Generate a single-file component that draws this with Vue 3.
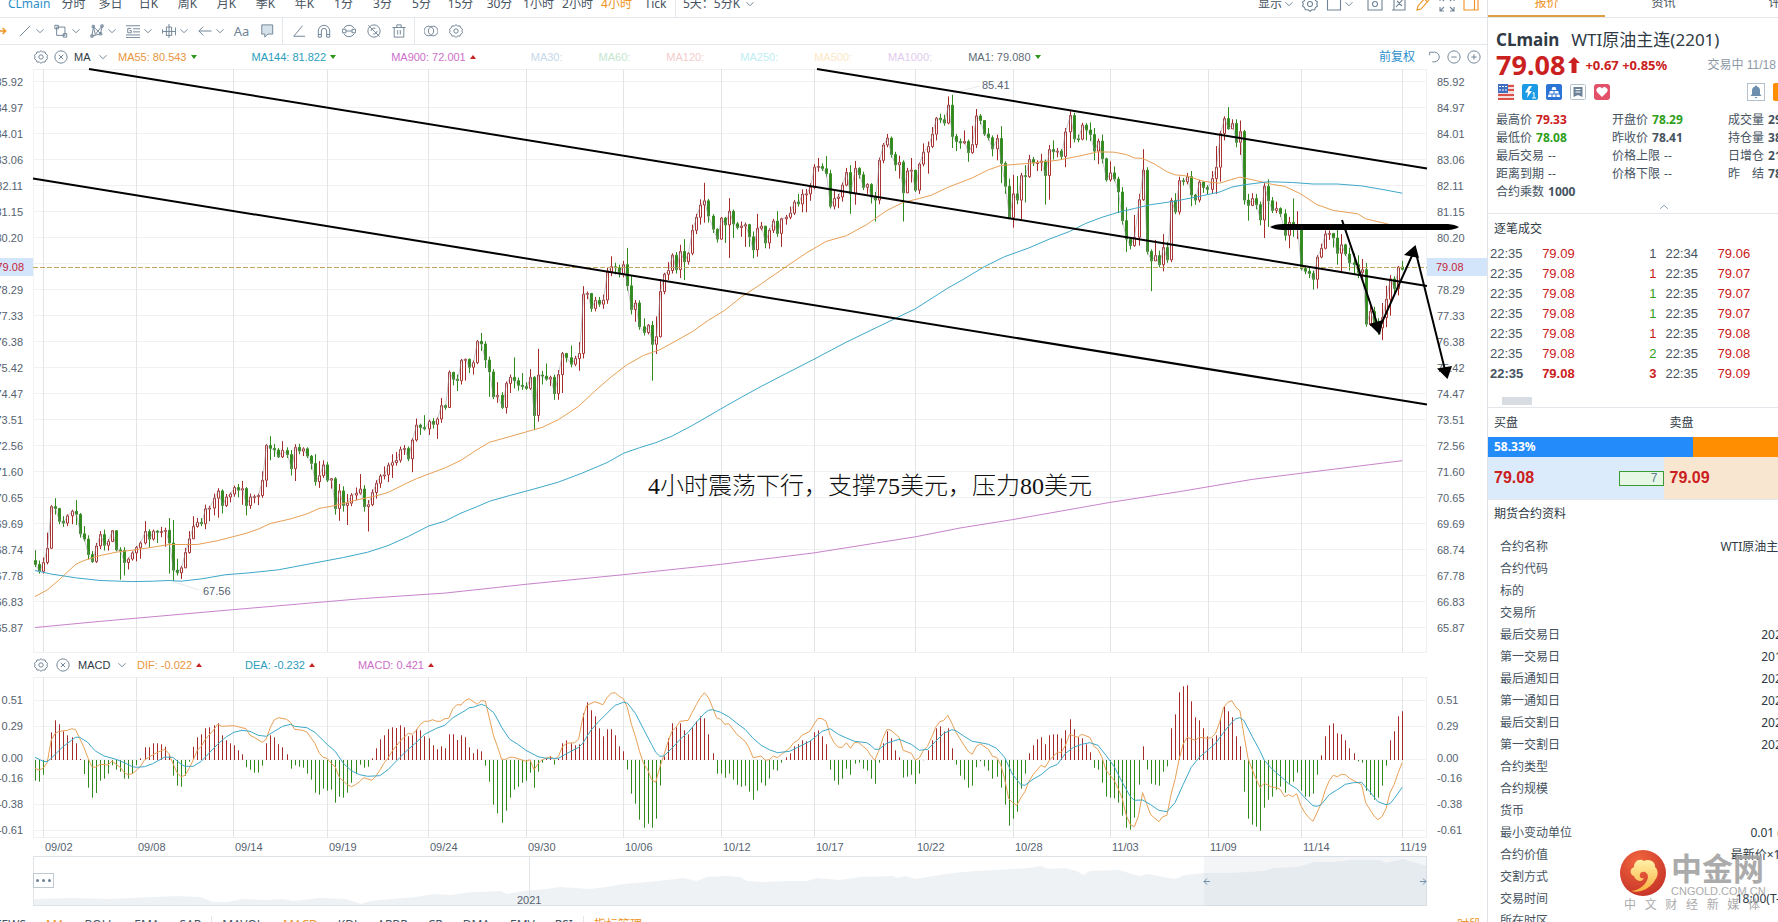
<script setup>
import {ref,computed} from "vue";

const period=ref("4小时");
const sideTab=ref("报价");
const mainIndicator=ref("MA");
const subIndicator=ref("MACD");
const dayMode=ref("5天：5分K");

const periods=["分时","多日","日K","周K","月K","季K","年K","1分","3分","5分","15分","30分","1小时","2小时","4小时","Tick"];
const sideTabs=["报价","资讯","评论"];

/**
 * 圖示路徑 (16x16)
 */
const icons={
  chevron:"M4 6l4 4 4-4",
  gear:"M8 .8l2 1.500 2.600-.1.900 2.400 2 1.500-.8 1.900.8 2-2 1.500-.9 2.300-2.600-.1L8 15.200l-2-1.500-2.600.1-.9-2.300L.5 10l.8-2-.8-1.900 2-1.500.9-2.400L6 2.300zM8 5.500a2.500 2.500 0 100 5 2.500 2.500 0 000-5z",
  close:"M8 1a7 7 0 100 14A7 7 0 008 1zM5.500 5.500l5 5M10.500 5.500l-5 5",
  move:"M-6 8H6M3 4.500L6.500 8 3 11.500M-1 2v12",
  line:"M2 14L14 2",
  rect:"M3 3.500h9.500V13H3zM1 1.500h4v4H1zM10.500 11h4v4h-4z",
  pattern:"M2 14L4 3l8 8 2-9M2 14l10-3M4 3l2 9L14 2M1 12.500h2.500V15H1zM2.500 1.500H5V4H2.500zM12.500 1H15v2.500h-2.500zM11 10h2.500v2.500H11z",
  fib:"M0 2h16M8 5.500h8M8 9h8M0 12.500h16M0 15.500h16M6 5h-4v5h4V7.500H4",
  measure:"M.5 6v5M.5 8.500h15M15.500 4v9M5 3.500h6M8 0v16M5 13h6M5 3.500v10M11 3.500v10",
  arrow:"M15.500 8H1M6 3L1 8l5 5",
  comment:"M2 1h12.500v10.500H9L5.500 15v-3.500H2z",
  angle:"M12 2L2 14h13",
  magnet:"M1.500 15V8a6.500 6.500 0 0113 0v7h-3.500V8a3 3 0 00-6 0v7zM1.500 12H5M11 12h3.500",
  swap:"M2 5A6.800 6.800 0 0114 5M2 11a6.800 6.800 0 0012 0M.5 6h4v4h-4zM11.500 6h4v4h-4zM4.500 8h7",
  hide:"M8 1a7 7 0 100 14A7 7 0 008 1zM1.500 1.500l13 13M4.500 8a3.500 3.500 0 015-3M11.500 8a3.500 3.500 0 01-4.500 3.200",
  trash:"M.5 4h15M5.500 4V1h5v3M2.500 4v11h11V4M6.500 7v5M9.500 7v5",
  overlap:"M5.500 2.500a5.500 5.500 0 100 11 5.500 5.500 0 000-11zM10.500 2.500a5.500 5.500 0 110 11 5.500 5.500 0 010-11z",
  undo:"M3 2.500h5.500a5.500 5.500 0 010 11H6M3 2.500V6",
  minus:"M8 1a7 7 0 100 14A7 7 0 008 1zM5 8h6",
  plus:"M8 1a7 7 0 100 14A7 7 0 008 1zM5 8h6M8 5v6",
  square:"M1.500 1h13v13h-13z",
  camera:"M1 2h14v12H1zM8 5.500a2.500 2.500 0 100 5 2.500 2.500 0 000-5z",
  edit:"M3 1v13h11V2M1 14h3M5 11L13 2M6 5l5 5",
  pencil:"M2 14l1-4 8-9 3 3-8 9zM9.500 3l3 3",
  expand:"M1 5V1h4M11 1h4v4M15 11v4h-4M5 15H1v-4M1 1l4 4M15 1l-4 4M15 15l-4-4M1 15l4-4",
  panel:"M1 1h14v13H1zM11.500 1v13",
  up:"M3 10.500L8 5.500l5 5"
};

const drawTools=["line","rect","pattern","fib","measure","arrow"];
const editTools=["angle","magnet","swap","hide","trash"];
const viewTools=["camera","edit","pencil","expand","panel"];

const maLegend=[
  {text:"MA55: 80.543",color:"#e8953c",dir:"down"},
  {text:"MA144: 81.822",color:"#2b9dbb",dir:"down"},
  {text:"MA900: 72.001",color:"#cc6fc8",dir:"up"},
  {text:"MA30:",color:"#c6d8ea"},
  {text:"MA60:",color:"#c3e6cd"},
  {text:"MA120:",color:"#f3cccc"},
  {text:"MA250:",color:"#bdeef2"},
  {text:"MA500:",color:"#fbe8c6"},
  {text:"MA1000:",color:"#dfcbee"},
  {text:"MA1: 79.080",color:"#5f6b77",dir:"down"}
];
const macdLegend=[
  {text:"DIF: -0.022",color:"#e8953c",dir:"up"},
  {text:"DEA: -0.232",color:"#2b9dbb",dir:"up"},
  {text:"MACD: 0.421",color:"#cc6fc8",dir:"up"}
];

const priceTicks=["85.92","84.97","84.01","83.06","82.11","81.15","80.20","","78.29","77.33","76.38","75.42","74.47","73.51","72.56","71.60","70.65","69.69","68.74","67.78","66.83","65.87"];
const macdTicks=["0.51","0.29","0.00","-0.16","-0.38","-0.61"];
const macdGrid=[23,49,82,101,127,153];
const dates=[
  ["09/02",10],["09/08",103],["09/14",200],["09/19",294],["09/24",395],["09/30",493],["10/06",590],["10/12",688],
  ["10/17",781],["10/22",882],["10/28",980],["11/03",1077],["11/09",1175],["11/14",1268],["11/19",1369]
];

// 每根K線: 收盤, 最高, 最低
const candles=[
  1318,1281,1325,1336,1308,1342,1313,1300,1342,1276,1235,1318,1167,1163,1278,1172,1145,1188,1205,1170,1213,1210,1192,1220,
  1191,1187,1218,1179,1175,1213,1187,1150,1215,1238,1184,1248,1252,1218,1258,1292,1242,1305,1311,1283,1314,1270,1262,1314,
  1240,1231,1278,1268,1227,1282,1258,1252,1282,1230,1228,1260,1280,1228,1284,1282,1273,1358,1313,1273,1347,1304,1300,1331,
  1288,1284,1308,1274,1270,1310,1262,1258,1303,1232,1205,1266,1252,1226,1274,1231,1227,1256,1234,1228,1262,1232,1220,1247,
  1229,1222,1272,1262,1197,1342,1333,1202,1362,1340,1303,1347,1327,1322,1356,1287,1275,1328,1251,1231,1290,1219,1192,1252,
  1208,1197,1222,1212,1197,1218,1173,1162,1226,1171,1165,1205,1145,1133,1190,1126,1119,1196,1164,1122,1185,1142,1134,1168,
  1134,1130,1156,1117,1112,1141,1124,1108,1143,1120,1100,1162,1164,1116,1190,1142,1133,1173,1141,1136,1158,1138,1133,1163,
  1098,1075,1144,1007,1004,1116,1015,983,1046,1019,1003,1037,1037,1014,1040,1020,996,1040,1031,1012,1040,1068,1019,1086,
  1012,1004,1100,1022,1003,1030,1016,1012,1035,1035,1012,1040,1054,1032,1070,1102,1030,1112,1086,1048,1118,1058,1046,1092,
  1098,1050,1103,1094,1092,1120,1172,1090,1188,1126,1108,1204,1164,1114,1180,1158,1134,1215,1137,1132,1166,1132,1117,1150,
  1121,1082,1136,1167,1111,1180,1162,1150,1232,1130,1122,1166,1106,1098,1146,1087,1082,1118,1084,1062,1096,1059,1052,1103,
  1052,1030,1092,1046,1024,1060,1018,1010,1052,1015,1006,1032,1042,1010,1048,993,988,1077,954,937,997,960,950,980,
  964,928,968,944,940,980,952,936,963,938,934,990,903,883,948,908,900,914,816,811,895,834,815,850,
  838,822,865,785,781,848,782,780,838,803,780,818,791,785,822,735,732,795,742,713,760,784,735,805,
  815,775,880,880,808,886,876,842,896,908,868,912,845,840,924,829,822,870,838,777,858,850,830,864,
  853,818,862,858,842,862,829,808,862,929,826,966,823,755,945,826,812,848,834,793,838,829,825,852,
  872,822,888,822,810,888,767,763,870,778,765,790,795,746,803,780,773,800,767,737,812,612,591,780,
  610,605,625,649,610,658,628,619,657,638,619,645,627,613,650,554,542,637,540,513,565,543,530,560,
  558,535,568,535,525,568,590,491,603,652,562,665,635,627,684,697,628,705,712,675,720,693,690,717,
  743,682,838,723,670,768,605,572,725,560,556,612,550,528,575,510,505,558,548,502,558,500,483,570,
  527,468,575,505,502,535,445,430,510,411,402,455,379,364,430,368,321,425,408,363,425,442,403,452,
  468,440,477,413,410,470,431,410,478,395,361,517,428,391,465,438,423,443,434,422,462,430,425,488,
  462,428,488,496,448,518,440,402,514,434,423,445,478,460,492,445,440,493,421,415,452,453,395,462,
  415,412,488,411,405,430,400,383,416,371,366,405,376,350,383,351,338,398,350,337,398,332,322,368,
  280,272,338,278,256,292,284,270,290,297,251,305,382,287,388,362,342,390,358,350,387,327,320,370,
  294,282,330,350,275,402,283,264,378,300,280,310,333,292,340,325,322,350,358,322,375,366,345,422,
  262,255,377,222,217,270,204,193,228,247,200,255,274,240,290,267,250,310,347,262,422,290,282,348,
  288,256,320,340,287,345,272,268,350,241,218,278,226,213,297,194,175,230,152,149,210,156,140,165,
  165,143,172,118,95,168,200,91,230,213,193,238,217,205,232,213,184,220,242,208,266,221,172,245,
  146,128,230,158,141,168,193,157,198,203,178,210,232,197,252,205,195,262,270,173,322,330,265,350,
  412,310,416,350,300,438,366,303,377,302,295,418,305,275,372,260,248,308,269,253,277,268,262,290,
  264,245,290,302,260,378,234,222,365,240,210,260,238,230,254,252,233,260,188,178,280,145,130,230,
  206,138,215,207,195,215,170,164,210,183,165,210,195,163,212,238,178,262,212,205,272,258,195,270,
  313,255,318,295,265,318,311,278,317,345,305,400,420,332,430,468,385,502,485,465,495,463,405,488,
  365,350,485,288,233,368,500,280,508,525,495,604,511,470,525,535,498,542,490,455,552,522,475,530,
  367,360,528,397,348,403,315,305,404,318,308,328,305,295,325,353,290,382,366,350,378,319,313,372,
  333,318,347,338,327,352,310,290,350,280,225,350,192,185,318,153,147,210,180,123,182,166,155,180,
  215,155,228,187,158,248,366,183,378,380,350,420,362,348,382,378,350,390,418,370,432,330,322,465,
  368,312,436,393,358,400,388,370,400,402,385,410,458,390,472,424,410,492,440,362,462,439,395,468,
  545,475,550,552,537,560,558,540,570,573,550,600,515,510,597,492,480,518,455,445,495,453,445,470,
  465,452,490,505,440,535,483,455,552,507,480,512,530,490,550,535,505,560,555,510,570,548,520,570,
  690,530,697,657,640,695,690,645,700,700,675,718,673,635,732,625,590,698,572,562,668,597,565,610,
  541,538,615,547,525,550
];

// 均線: 序號, 值
const ma55=[0,1402,3,1385,6,1358,10,1318,12,1308,16,1295,20,1286,24,1281,29,1273,33,1266,40,1266,45,1256,49,1245,52,1237,55,1226,58,1211,63,1199,67,1186,70,1172,74,1164,80,1148,84,1139,87,1130,91,1109,94,1094,97,1082,101,1066,105,1046,109,1018,112,999,115,990,121,972,125,960,129,940,134,905,138,865,142,828,146,796,150,772,154,757,158,734,162,710,166,680,170,654,174,620,179,585,185,541,190,505,195,474,200,459,205,430,210,393,214,372,218,362,221,353,225,333,231,308,235,287,238,276,245,270,252,262,257,252,262,240,266,241,269,247,271,256,273,257,276,272,279,292,281,300,284,303,288,317,292,322,295,312,297,306,301,315,305,325,308,330,312,350,316,378,320,393,326,402,328,415,334,430,337,434];
const ma144=[0,1334,4,1343,10,1353,16,1360,24,1363,29,1362,33,1360,36,1362,41,1356,47,1345,53,1340,60,1332,70,1312,76,1300,82,1286,87,1269,92,1245,97,1218,101,1205,105,1184,109,1167,112,1153,117,1138,123,1121,129,1103,135,1079,141,1052,145,1028,149,1013,153,1000,157,983,162,955,169,912,174,882,179,853,185,820,192,782,200,737,208,696,217,650,225,596,229,572,234,540,239,514,245,491,250,468,255,448,259,427,263,411,267,398,271,388,275,378,281,369,288,354,292,345,295,332,298,326,304,318,310,320,315,324,321,324,327,329,333,340,337,348];
const ma900=[0,1483,16,1467,49,1436,81,1407,101,1393,114,1378,121,1370,145,1345,169,1318,192,1288,217,1246,228,1223,241,1201,265,1156,282,1128,300,1096,312,1080,337,1047];

const macdBars=[
  392,395,374,334,247,211,223,244,256,262,280,327,372,413,443,429,392,386,371,346,359,365,386,386,371,346,325,292,292,280,280,283,290,313,377,407,410,377,335,290,
  262,253,235,232,226,220,256,271,280,286,301,313,352,359,368,368,347,280,256,262,283,292,313,356,346,350,353,371,389,428,434,416,422,419,458,440,443,428,398,371,
  344,353,350,325,295,268,256,238,232,234,226,232,259,256,238,241,259,265,286,298,289,295,253,253,270,256,262,292,310,298,304,347,395,464,490,518,482,443,419,410,
  398,392,368,413,365,338,325,319,344,325,280,271,280,286,283,190,157,181,199,235,259,238,238,256,289,304,359,431,461,509,533,521,533,506,407,319,265,220,232,220,
  241,253,232,214,199,205,253,310,371,371,383,371,389,404,410,407,425,449,422,398,407,386,359,362,338,322,310,289,283,271,274,271,247,241,259,283,359,392,404,386,
  356,374,341,338,356,362,386,401,338,280,244,265,301,322,383,380,374,401,371,331,301,271,235,229,244,235,295,344,377,389,413,407,352,334,349,362,386,380,413,464,
  527,506,485,416,371,310,286,268,262,283,256,253,253,265,241,208,238,262,265,283,307,353,359,398,440,443,445,458,497,533,539,503,404,289,359,401,404,407,365,349,
  235,193,127,109,106,154,202,211,235,259,265,256,205,169,184,202,259,289,425,506,524,530,542,473,449,440,419,410,428,401,395,368,422,440,440,431,374,316,259,226,
  220,250,253,271,295,310,334,338,422,434,449,443,407,347,271,244,199,184
];
const dif=[0,355,1,360,2,355,3,338,4,270,5,250,6,244,8,241,9,236,10,239,11,265,12,290,13,322,14,350,15,352,16,343,18,345,19,333,20,343,21,352,22,368,23,374,24,371,25,361,26,349,27,330,28,322,30,308,32,298,33,311,34,340,35,368,36,380,37,376,38,355,39,330,40,301,41,289,42,268,44,240,45,223,46,229,49,227,51,233,52,236,53,256,54,262,56,277,57,268,58,232,59,209,60,203,62,208,63,217,64,238,66,241,67,246,69,280,70,308,71,322,72,325,73,340,74,350,75,382,77,404,78,410,79,404,80,395,81,383,83,391,84,379,85,361,86,340,87,325,88,304,90,274,92,250,93,253,94,241,95,223,96,214,97,214,98,209,99,214,100,214,101,206,102,205,103,176,104,164,105,165,106,152,107,146,109,163,110,152,111,153,112,205,113,256,114,290,115,328,116,328,117,322,118,322,121,334,122,329,123,359,124,341,125,329,127,320,128,328,129,319,130,290,131,280,133,278,134,268,135,205,136,166,138,155,140,164,141,143,142,130,143,128,144,139,145,146,146,172,147,223,148,259,149,304,150,341,151,359,152,389,153,397,154,352,155,316,156,277,157,244,158,232,159,214,161,211,162,187,163,164,164,143,165,128,166,143,167,172,168,203,169,208,170,223,171,221,173,253,175,274,176,293,177,323,179,318,180,331,181,329,182,318,183,323,184,313,186,295,187,278,188,272,189,256,191,244,192,223,193,205,194,206,195,214,196,256,197,278,198,292,199,292,200,278,201,295,202,277,203,278,205,298,206,316,207,331,208,301,209,265,210,238,211,241,213,262,214,301,216,310,217,331,218,323,219,301,220,289,221,262,222,232,223,215,224,211,225,196,226,220,227,247,229,286,230,304,231,313,232,290,233,281,235,298,236,319,237,322,238,343,239,386,240,446,241,458,242,466,243,443,244,425,245,394,246,374,248,346,249,352,250,331,252,307,253,307,254,286,255,253,257,262,258,253,260,262,261,289,262,298,263,322,264,361,266,391,267,416,268,446,269,497,270,524,271,530,272,497,273,428,274,461,275,494,277,515,278,500,279,496,280,434,281,389,282,328,283,283,284,262,286,271,287,262,289,265,290,263,291,250,292,217,293,172,294,157,295,152,296,172,297,182,298,256,299,325,300,358,301,388,302,413,303,400,305,412,306,412,307,419,308,440,309,434,310,440,311,431,312,467,313,488,314,503,315,514,316,488,317,461,318,422,319,392,320,376,321,380,322,373,323,374,324,385,326,398,327,404,328,458,330,497,331,509,332,500,333,476,334,428,335,404,336,368,337,338];
const dea=[0,322,1,328,2,334,3,335,4,325,5,313,7,289,9,271,10,262,11,262,13,277,14,292,15,304,17,318,20,328,22,338,24,350,25,352,27,350,29,341,32,321,34,322,36,343,37,349,39,349,41,334,43,308,45,283,47,262,49,247,51,241,53,244,55,256,57,259,59,244,61,229,63,223,64,229,67,233,69,247,72,283,74,304,76,340,78,362,80,374,82,379,85,377,87,359,90,322,92,298,94,277,96,253,99,235,101,226,103,203,106,182,107,173,108,172,110,163,111,167,112,178,113,187,114,208,115,232,117,268,119,283,121,301,124,320,126,325,129,325,131,311,134,292,135,280,137,241,139,214,141,190,143,166,145,157,146,159,148,190,150,238,152,284,153,307,154,319,155,318,157,295,159,268,161,247,163,217,165,190,166,181,167,179,169,187,171,200,173,220,175,238,177,265,179,286,181,299,183,308,186,304,188,292,191,274,194,244,196,236,198,253,200,264,202,274,205,278,206,286,207,298,208,298,210,279,213,268,216,283,218,301,220,298,222,274,224,250,226,239,227,242,229,259,231,274,233,278,235,283,237,295,239,322,241,374,243,404,244,406,246,388,248,374,250,353,252,343,254,310,256,292,258,283,260,278,262,286,264,316,266,350,268,397,270,440,271,451,273,450,275,464,277,481,279,485,281,458,283,404,285,352,287,322,289,301,291,280,293,247,295,217,296,206,297,203,298,212,300,259,302,304,303,331,305,358,307,379,309,401,311,416,313,443,315,467,316,469,317,464,319,434,321,419,323,403,325,398,327,397,329,425,331,455,333,464,334,461,335,446,337,412];

// 縮略圖走勢
const overview=[
  0,43,40,42,77,43,120,41,143,40,167,41,180,46,194,46,210,43,233,44,250,43,260,45,287,42,313,43,328,48,337,45,360,43,383,41,400,38,417,39,440,36,
  447,36,467,35,474,38,490,35,514,33,527,31,557,33,580,30,590,28,614,26,634,24,650,22,664,25,674,21,694,20,707,21,714,25,730,26,754,25,774,25,784,22,
  807,24,827,21,860,20,864,22,872,20,882,23,900,20,920,17,941,15,964,14,978,13,995,12,1008,10,1015,13,1032,12,1044,15,1050,19,1057,15,1086,14,1096,17,
  1106,20,1116,18,1130,21,1142,23,1152,19,1171,17,1198,17,1231,15,1241,12,1265,11,1282,6,1299,6,1319,4,1346,4,1353,7,1370,3,1380,6,1394,10
];

const xAt=(i)=>2+i*4.057;
const barX=(i)=>Math.round(xAt(i))+0.5;
const priceY=(v)=>Math.round((v/2.613-9)*10)/10;
const macdY=(v)=>Math.round((v/3-27)*10)/10;

function linePath(data,toY){
  let d="";
  for(let i=0;i<data.length;i+=2){
    d+=(i?"L":"M")+xAt(data[i]).toFixed(1)+" "+toY(data[i+1]);
  }
  return d;
}

const candlePaths=computed(()=>{
  let redBody="",redWick="",greenBody="",greenWick="",close="";
  let open=1308;
  for(let n=0;n<candles.length/3;n++){
    const c=candles[n*3];
    const top=priceY(Math.min(open,c));
    const bottom=Math.max(priceY(Math.max(open,c)),top+1);
    const high=Math.min(priceY(candles[n*3+1]),top);
    const low=Math.max(priceY(candles[n*3+2]),bottom);
    const x=barX(n);
    const wick=`M${x} ${high}V${top}M${x} ${bottom}V${low}`;
    const body=`M${x-1} ${top}h2V${bottom}h-2z`;
    if(c<open){
      redBody+=body;
      redWick+=wick;
    }else{
      greenBody+=body;
      greenWick+=wick;
    }
    close+=(n?"L":"M")+x+" "+priceY(c);
    open=c;
  }
  return {redBody,redWick,greenBody,greenWick,close};
});

const macdPaths=computed(()=>{
  let up="",down="";
  macdBars.forEach((v,i)=>{
    const bar=`M${barX(i)} 83V${macdY(v)}`;
    if(v<331) up+=bar;
    else down+=bar;
  });
  return {up,down};
});

const overviewPath=computed(()=>{
  let d="M0 50";
  for(let i=0;i<overview.length;i+=2) d+=`L${overview[i]} ${overview[i+1]}`;
  return d+"V50z";
});

const stats=[
  ["最高价","79.33","red"],["开盘价","78.29","green"],["成交量","29.15万",""],
  ["最低价","78.08","green"],["昨收价","78.41",""],["持仓量","38.02万",""],
  ["最后交易","--","plain"],["价格上限","--","plain"],["日增仓","2114",""],
  ["距离到期","--","plain"],["价格下限","--","plain"],["昨　结","78.36",""],
  ["合约乘数","1000",""]
];
const trades=[
  ["22:35","79.09","1","gray","22:34","79.06"],
  ["22:35","79.08","1","red","22:35","79.07"],
  ["22:35","79.08","1","green","22:35","79.07"],
  ["22:35","79.08","1","green","22:35","79.07"],
  ["22:35","79.08","1","red","22:35","79.08"],
  ["22:35","79.08","2","green","22:35","79.08"],
  ["22:35","79.08","3","red","22:35","79.09"]
];
const contract=[
  ["合约名称","WTI原油主连(2201)"],["合约代码",""],["标的",""],["交易所",""],
  ["最后交易日","2021/12/20"],["第一交易日","2015/11/23"],["最后通知日","2021/12/22"],["第一通知日","2021/12/21"],
  ["最后交割日","2022/01/31"],["第一交割日","2022/01/01"],["合约类型",""],["合约规模",""],["货币",""],
  ["最小变动单位","0.01 (美元/桶)"],["合约价值","最新价×1000美元"],["交割方式",""],["交易时间","18:00(T-1)-17:00"],["所在时区",""]
];
const mainNames=["MA","BOLL","EMA","SAR"];
const subNames=["MAVOL","MACD","KDJ","ARBR","CR","DMA","EMV","RSI"];
</script>

<template>
  <div class="page">
    <main class="main">
      <!-- 週期 -->
      <nav class="period-bar">
        <button class="symbol">CLmain</button>
        <button v-for="p in periods" :key="p" class="period" :class="{active:p===period}" @click="period=p">{{p}}</button>
        <span class="bar-line"></span>
        <select v-model="dayMode" class="day-mode" aria-label="多日模式"><option>5天：5分K</option></select>
        <svg class="chev" viewBox="0 0 16 16"><path :d="icons.chevron"/></svg>
        <div class="period-right">
          <button class="menu">显示</button>
          <svg class="chev" viewBox="0 0 16 16"><path :d="icons.chevron"/></svg>
          <button class="tool" aria-label="设置"><svg viewBox="0 0 16 16"><path :d="icons.gear"/></svg></button>
          <button class="tool" aria-label="布局"><svg viewBox="0 0 16 16"><path :d="icons.square"/></svg></button>
          <svg class="chev last" viewBox="0 0 16 16"><path :d="icons.chevron"/></svg>
          <button v-for="t in viewTools" :key="t" class="tool" :class="{orange:t==='pencil'||t==='panel'}" :aria-label="t"><svg viewBox="0 0 16 16"><path :d="icons[t]"/></svg></button>
        </div>
      </nav>
      <!-- 畫線工具 -->
      <div class="toolbar">
        <button class="move" aria-label="移动"><svg viewBox="0 0 16 16"><path :d="icons.move"/></svg></button>
        <div class="draw-group">
          <button v-for="t in drawTools" :key="t" class="dual" :aria-label="t">
            <svg viewBox="0 0 16 16"><path :d="icons[t]"/></svg>
            <svg class="chev" viewBox="0 0 16 16"><path :d="icons.chevron"/></svg>
          </button>
        </div>
        <button class="single aa">Aa</button>
        <button class="single filled" aria-label="备注"><svg viewBox="0 0 16 16"><path :d="icons.comment"/></svg></button>
        <span class="tool-line"></span>
        <button v-for="t in editTools" :key="t" class="single" :aria-label="t"><svg viewBox="0 0 16 16"><path :d="icons[t]"/></svg></button>
        <span class="tool-line"></span>
        <button class="single" aria-label="叠加"><svg viewBox="0 0 16 16"><path :d="icons.overlap"/></svg></button>
        <button class="single" aria-label="设置"><svg viewBox="0 0 16 16"><path :d="icons.gear"/></svg></button>
      </div>
      <!-- 均線 -->
      <div class="legend">
        <button class="mini" aria-label="设置"><svg viewBox="0 0 16 16"><path :d="icons.gear"/></svg></button>
        <button class="mini" aria-label="关闭"><svg viewBox="0 0 16 16"><path :d="icons.close"/></svg></button>
        <select v-model="mainIndicator" aria-label="主图指标"><option>MA</option></select>
        <svg class="chev" viewBox="0 0 16 16"><path :d="icons.chevron"/></svg>
        <span v-for="m in maLegend" :key="m.text" class="legend-item" :class="{valued:m.dir}" :style="{color:m.color}">{{m.text}}<i v-if="m.dir" :class="m.dir"></i></span>
        <div class="legend-right">
          <button class="adjust">前复权</button>
          <button class="mini" aria-label="还原"><svg viewBox="0 0 16 16"><path :d="icons.undo"/></svg></button>
          <button class="mini" aria-label="缩小"><svg viewBox="0 0 16 16"><path :d="icons.minus"/></svg></button>
          <button class="mini" aria-label="放大"><svg viewBox="0 0 16 16"><path :d="icons.plus"/></svg></button>
        </div>
      </div>
      <!-- K線圖 -->
      <div class="chart">
        <div class="axis left">
          <div v-for="(t,i) in priceTicks" :key="i" class="tick">{{t}}</div>
          <div class="now">79.08</div>
        </div>
        <svg class="plot price-plot" viewBox="0 0 1394 584" preserveAspectRatio="none">
          <path class="grid-h" d="M0 .5H1394M0 583.500H1394"/>
          <path v-for="n in 22" :key="'h'+n" class="grid-h" :d="`M0 ${n*26-13.5}H1394`"/>
          <path v-for="d in dates" :key="d[0]" class="grid-v" :d="`M${d[1]+0.5} 0V583`"/>
          <path class="grid-h" d="M.5 0V583M1393.500 0V583"/>
          <path class="leader" d="M141 513L166 521M920 24L947 17"/>
          <path class="red-wick" :d="candlePaths.redWick"/>
          <path class="green-wick" :d="candlePaths.greenWick"/>
          <path class="red-body" :d="candlePaths.redBody"/>
          <path class="green-body" :d="candlePaths.greenBody"/>
          <path class="close-line" :d="candlePaths.close"/>
          <path class="ma55" :d="linePath(ma55,priceY)"/>
          <path class="ma144" :d="linePath(ma144,priceY)"/>
          <path class="ma900" :d="linePath(ma900,priceY)"/>
          <path class="now-line" d="M0 198.500H1394"/>
          <path class="trend" d="M56 0L1394 217M0 109.500L1394 335.500M784 0L1394 99.500"/>
          <path class="solid" d="M1237 158Q1242 155 1250 155H1415Q1422 155.500 1426 158Q1422 160.500 1415 161H1250Q1242 161 1237 158z"/>
          <path class="arrow-line" d="M1309 151L1346 260L1382 180L1413 305"/>
          <path class="solid" d="M1336 255L1350 251L1347 266zM1371 186L1386 189L1382.500 176zM1404 299.500L1419 297L1414.500 310z"/>
          <text class="mark" x="170" y="526">67.56</text>
          <text class="mark" x="949" y="20">85.41</text>
          <text class="note" x="615" y="425">4小时震荡下行，支撑75美元，压力80美元</text>
        </svg>
        <div class="axis right">
          <div v-for="(t,i) in priceTicks" :key="i" class="tick">{{t}}</div>
          <div class="now">79.08</div>
        </div>
      </div>
      <!-- MACD -->
      <div class="legend sub">
        <button class="mini" aria-label="设置"><svg viewBox="0 0 16 16"><path :d="icons.gear"/></svg></button>
        <button class="mini" aria-label="关闭"><svg viewBox="0 0 16 16"><path :d="icons.close"/></svg></button>
        <select v-model="subIndicator" aria-label="副图指标"><option>MACD</option></select>
        <svg class="chev" viewBox="0 0 16 16"><path :d="icons.chevron"/></svg>
        <span v-for="m in macdLegend" :key="m.text" class="legend-item" :style="{color:m.color}">{{m.text}}<i :class="m.dir"></i></span>
      </div>
      <div class="chart macd">
        <div class="axis left">
          <div v-for="t in macdTicks" :key="t" class="tick" :class="{zero:t==='0.00'}">{{t}}</div>
        </div>
        <svg class="plot macd-plot" viewBox="0 0 1394 161" preserveAspectRatio="none">
          <path class="grid-h" d="M0 .5H1394M0 160.500H1394M.5 0V161M1393.500 0V161"/>
          <path v-for="y in macdGrid" :key="y" class="grid-h" :d="`M0 ${y+0.5}H1394`"/>
          <path v-for="d in dates" :key="d[0]" class="grid-v" :d="`M${d[1]+0.5} 0V161`"/>
          <path class="bar-up" :d="macdPaths.up"/>
          <path class="bar-down" :d="macdPaths.down"/>
          <path class="ma55" :d="linePath(dif,macdY)"/>
          <path class="ma144" :d="linePath(dea,macdY)"/>
        </svg>
        <div class="axis right">
          <div v-for="t in macdTicks" :key="t" class="tick" :class="{zero:t==='0.00'}">{{t}}</div>
        </div>
      </div>
      <svg class="date-axis" viewBox="0 0 1394 18" preserveAspectRatio="none">
        <text v-for="d in dates" :key="d[0]" class="mark" :x="Math.min(d[1]+2,1367)" y="13">{{d[0]}}</text>
      </svg>
      <!-- 縮略圖 -->
      <div class="overview">
        <svg viewBox="0 0 1394 50" preserveAspectRatio="none">
          <path class="area" :d="overviewPath"/>
          <path class="grid-v" d="M.5 0V50M496.500 0V50"/>
          <path class="frame" d="M0 .5H1394M0 49.500H1394M1393.500 0V50"/>
          <rect class="range" x="1171" y="0" width="223" height="50"/>
          <path class="handle" d="M1177 25.500h-6m3-3l-3 3 3 3M1387 25.500h6m-3-3l3 3-3 3"/>
          <text class="mark" x="484" y="48">2021</text>
        </svg>
        <button class="more" aria-label="更多"><b></b><b></b><b></b></button>
      </div>
      <!-- 指標 -->
      <nav class="indicator-bar">
        <button class="first">VIEWS</button>
        <button v-for="n in mainNames" :key="n" :class="{active:n===mainIndicator}" @click="mainIndicator='MA'">{{n}}</button>
        <span class="bar-line"></span>
        <button v-for="n in subNames" :key="n" :class="{active:n===subIndicator}" @click="subIndicator='MACD'">{{n}}</button>
        <span class="bar-line"></span>
        <button class="active">指标管理</button>
        <button class="active session">时段</button>
      </nav>
    </main>

    <aside class="side">
      <div class="side-inner">
        <nav class="side-tabs">
          <button v-for="t in sideTabs" :key="t" :class="{active:t===sideTab}" @click="sideTab=t">{{t}}</button>
        </nav>
        <header class="quote">
          <h1><b>CLmain</b><span>WTI原油主连(2201)</span></h1>
          <div class="price">
            <strong>79.08</strong>
            <svg viewBox="0 0 12 16"><path d="M6 0l6 6H8.500v10h-5V6H0z"/></svg>
            <em>+0.67 +0.85%</em>
            <time>交易中 11/18 22:35</time>
          </div>
          <div class="badges">
            <svg viewBox="0 0 16 16"><path fill="#f7dede" d="M0 0h16v16H0z"/><path fill="#d9534a" d="M10 1h6v2h-6zM10 5h6v2h-6zM0 10h16v2H0zM0 14h16v2H0z"/><path fill="#3c6fc0" d="M0 0h10v9H0z"/><path stroke="#fff" stroke-dasharray="2 1" d="M1 2.500h8M1 6h8"/></svg>
            <svg viewBox="0 0 16 16"><rect width="16" height="16" rx="2" fill="#1b9be6"/><path fill="#fff" d="M7 2L3 8.500h3L5 14l5-7H7l3-5z"/><path stroke="#fff" fill="none" d="M10.500 9.500l1.500-1V14m-2 0h4"/></svg>
            <svg viewBox="0 0 16 16"><rect width="16" height="16" rx="2" fill="#2c74d6"/><path fill="#fff" d="M6.500 3h3l1 3h-5zM4 7h3.500v2.500H3zM8.500 7H12l1 2.500H8.500zM2.500 10.500h3V13H1.800zM6.500 10.500h3V13h-3zM10.500 10.500h3l.7 2.500h-3.700z"/></svg>
            <svg viewBox="0 0 16 16"><rect x=".5" y=".5" width="15" height="15" rx="1" fill="#fff" stroke="#b5c2ce"/><path fill="#6c8299" d="M3.500 3h9v10L8 11l-4.500 2z"/><path stroke="#fff" d="M5.500 5.500h5M5.500 8h5"/></svg>
            <svg viewBox="0 0 16 16"><rect width="16" height="16" rx="3" fill="#e2506a"/><path fill="#fff" d="M8 13L3 8a3 3 0 015-3.500A3 3 0 0113 8z"/></svg>
            <button class="bell" aria-label="提醒"><svg viewBox="0 0 16 16"><path fill="#6c8fae" d="M8 1.500a1 1 0 011 1c2 .5 3 2 3 4V10l1.500 2h-11L4 10V6.500c0-2 1-3.500 3-4a1 1 0 011-1zM6.500 13h3l-1.500 1.500z"/></svg></button>
            <button class="trade" aria-label="交易"></button>
          </div>
          <dl class="stats">
            <div v-for="s in stats" :key="s[0]"><dt>{{s[0]}}</dt><dd :class="s[2]">{{s[1]}}</dd></div>
          </dl>
          <button class="fold" aria-label="收起"><svg viewBox="0 0 16 16"><path :d="icons.up"/></svg></button>
        </header>
        <section class="trades">
          <h2>逐笔成交</h2>
          <table>
            <tbody>
              <tr v-for="(t,i) in trades" :key="i">
                <td>{{t[0]}}</td><td class="red">{{t[1]}}</td><td class="count" :class="t[3]">{{t[2]}}</td>
                <td>{{t[4]}}</td><td class="red">{{t[5]}}</td><td></td>
              </tr>
            </tbody>
          </table>
          <div class="thumb"></div>
        </section>
        <section class="depth">
          <div class="halves titles"><h2>买盘</h2><h2>卖盘</h2></div>
          <div class="ratio"><span :style="{width:'58.33%'}">58.33%</span></div>
          <div class="halves quotes">
            <div class="bid"><b>79.08</b><span>7</span></div>
            <div class="ask"><b>79.09</b></div>
          </div>
        </section>
        <section class="contract">
          <h2>期货合约资料</h2>
          <dl>
            <div v-for="c in contract" :key="c[0]"><dt>{{c[0]}}</dt><dd>{{c[1]}}</dd></div>
          </dl>
        </section>
      </div>
      <!-- 浮水印 -->
      <div class="brand">
        <div class="brand-top">
          <svg viewBox="0 0 46 46">
            <defs>
              <radialGradient id="ball" cx="40%" cy="25%" r="80%"><stop offset="0" stop-color="#f0562a"/><stop offset="1" stop-color="#c01c10"/></radialGradient>
              <linearGradient id="gold" x1="0" y1="0" x2="0" y2="1"><stop offset="0" stop-color="#fff0a0"/><stop offset="1" stop-color="#f9a82a"/></linearGradient>
            </defs>
            <circle cx="23" cy="23" r="23" fill="url(#ball)"/>
            <path fill="url(#gold)" d="M11 41C20 40 27 34 28 27C28 22 22 20 20 24C19 28 22 29 24 28C22 33 15 31 14 26C10 25 9 19 14 17C14 11 20 8 24 11C29 8 36 12 35 17C39 20 38 27 35 30C31 38 20 44 11 41z"/>
          </svg>
          <div><strong>中金网</strong><small>CNGOLD.COM.CN</small></div>
        </div>
        <div class="brand-line"><span v-for="c in '中文财经新媒体'" :key="c">{{c}}</span></div>
      </div>
    </aside>
  </div>
</template>

<style>
html, body {
  margin: 0;
  background: #fff;
  overflow: hidden;
}
</style>

<style scoped>
.page {
  display: flex;
  height: 100vh;
  overflow: hidden;
  background: #fff;
  color: #46535f;
  font: 12px/18px "Noto Sans", "Noto Sans CJK SC", sans-serif;
}
button, select {
  margin: 0;
  padding: 0;
  border: 0;
  background: none;
  color: inherit;
  font: inherit;
  cursor: pointer;
}
select {
  appearance: none;
}
h1, h2, dl, dd {
  margin: 0;
  font-weight: normal;
}
svg {
  display: block;
  flex: none;
}
.main {
  flex: 1;
  min-width: 0;
}
.main button svg, .fold svg, .chev {
  fill: none;
  stroke: #6f8496;
  stroke-width: 1.1;
}
.chev {
  width: 14px;
  height: 14px;
  margin: 0 -2px;
}
.period-bar {
  display: flex;
  align-items: flex-end;
  box-sizing: border-box;
  height: 18px;
  border-bottom: 1px solid #e3e6ea;
  line-height: 26px;
  white-space: nowrap;
}
.period-bar svg {
  height: 26px;
}
.symbol {
  width: 55px;
  padding-left: 8px;
  color: #2c8fc9;
  text-align: left;
}
.period {
  width: 39px;
}
.symbol + .period, .symbol + .period + .period {
  width: 37px;
}
.period.active, .indicator-bar .active {
  color: #ee9322;
}
.bar-line {
  align-self: stretch;
  width: 1px;
  background: #e3e6ea;
}
.day-mode {
  margin: 0 4px 0 7px;
  height: 26px;
}
.period-right {
  display: flex;
  gap: 8px;
  margin-left: auto;
  padding-right: 8px;
}
.period-right .chev {
  margin-left: -8px;
}
.period-right .chev.last {
  margin-right: 3px;
}
.tool svg {
  width: 16px;
}
.main .tool.orange svg {
  stroke: #ee9322;
}
.toolbar {
  display: flex;
  align-items: center;
  box-sizing: border-box;
  height: 27px;
  border-bottom: 1px solid #e3e6ea;
}
.toolbar button {
  display: flex;
  align-items: center;
  justify-content: center;
}
.toolbar button svg {
  width: 14px;
  height: 14px;
}
.move {
  width: 16px;
}
.main .toolbar .move svg {
  overflow: visible;
  margin-right: 2px;
  stroke: #ee9322;
  stroke-width: 1.6;
}
.draw-group {
  display: flex;
  gap: 6px;
  margin-right: 3px;
}
.toolbar .dual {
  width: 30px;
  gap: 3px;
}
.toolbar .single {
  width: 25px;
}
.toolbar .aa {
  color: #6f8496;
  font-size: 13px;
}
.main .filled svg {
  fill: #d5e2ec;
}
.tool-line {
  width: 1px;
  height: 26px;
  margin: 0 3px;
  background: #e3e6ea;
}
.legend {
  display: flex;
  align-items: center;
  height: 24px;
  padding-left: 34px;
  font-family: "Liberation Sans", "Noto Sans CJK SC", sans-serif;
  font-size: 11px;
  white-space: nowrap;
}
.mini {
  margin-right: 6px;
}
.mini svg {
  width: 14px;
  height: 14px;
}
.legend select {
  margin-right: 7px;
  color: #2f3a45;
}
.legend > .chev {
  margin-right: 8px;
}
.legend-item {
  display: flex;
  align-items: center;
  margin-right: 36px;
}
.legend-item.valued {
  margin-right: 55px;
}
.sub .legend-item {
  margin-right: 43px;
}
.sub .mini {
  margin-right: 8px;
}
.sub select {
  margin-right: 6px;
}
.legend-item i {
  margin-left: 4px;
  border: 3px solid transparent;
}
.legend-item .up {
  border-top: 0;
  border-bottom: 4px solid #c52222;
}
.legend-item .down {
  border-bottom: 0;
  border-top: 4px solid #2c9418;
}
.legend-right {
  display: flex;
  align-items: center;
  margin-left: auto;
}
.legend-right .mini + .mini {
  margin-left: 0;
}
.adjust {
  margin-right: 12px;
  color: #2c8fc9;
  font-size: 12px;
}
.chart {
  display: flex;
  height: 584px;
}
.chart.macd {
  height: 161px;
}
.axis {
  position: relative;
  box-sizing: border-box;
  color: #55626f;
  font: 11px/26px "Liberation Sans", sans-serif;
}
.left {
  width: 33px;
  padding-right: 10px;
  display: flex;
  flex-direction: column;
  align-items: flex-end;
}
.right {
  width: 60px;
  padding-left: 10px;
}
.tick {
  height: 26px;
}
.macd .axis {
  padding-top: 10px;
}
.tick.zero {
  box-sizing: border-box;
  padding-top: 13px;
  line-height: 13px;
}
.now {
  position: absolute;
  top: 189px;
  right: 0;
  left: 0;
  padding-left: 9px;
  background: #d2e5fb;
  color: #c8253a;
  line-height: 18px;
}
.left .now {
  display: flex;
  justify-content: flex-end;
  padding: 0 9px 0 0;
}
.plot {
  flex: 1;
  min-width: 0;
  height: 100%;
  overflow: visible;
  position: relative;
  z-index: 1;
}
.plot path {
  fill: none;
}
.handle, .frame, .overview .grid-v {
  fill: none;
}
.plot .grid-h {
  stroke: #eff1f3;
}
.plot .grid-v, .overview .grid-v {
  stroke: #e2e5e8;
}
.plot .leader {
  stroke: #e6eaed;
}
.plot .red-wick, .plot .bar-up {
  stroke: #a62a2a;
}
.plot .green-wick, .plot .bar-down {
  stroke: #2f8a1c;
}
.plot .red-body {
  fill: #fff;
  stroke: #a83434;
}
.plot .green-body {
  fill: #2f8a1c;
  stroke: #3a8c27;
}
.plot .close-line {
  stroke: #8c8f98;
  opacity: .5;
}
.plot .ma55 {
  stroke: #e8a056;
}
.plot .ma144 {
  stroke: #3ea8c8;
}
.plot .ma900 {
  stroke: #c983cc;
}
.plot .now-line {
  stroke: #c4a65e;
  stroke-dasharray: 5 2;
}
.plot .trend {
  stroke: #000;
  stroke-width: 2;
}
.plot .arrow-line {
  stroke: #000;
  stroke-width: 2;
}
.plot .solid {
  fill: #000;
}
.mark {
  fill: #55626f;
  font: 11px "Liberation Sans", sans-serif;
}
.note {
  fill: #111;
  font: 300 24px "Liberation Serif", "Noto Sans CJK SC", serif;
}
.date-axis {
  width: calc(100% - 93px);
  height: 18px;
  margin-left: 33px;
}
.overview {
  position: relative;
  margin: 0 60px 0 33px;
}
.overview > svg {
  width: 100%;
  height: 50px;
}
.area {
  fill: #eff2f5;
}
.frame {
  stroke: #dde2e6;
}
.range {
  fill: #c8d2da;
  opacity: .22;
}
.handle {
  stroke: #6c8fae;
}
.more {
  position: absolute;
  top: 17px;
  left: 0;
  display: flex;
  align-items: center;
  justify-content: center;
  gap: 3px;
  width: 21px;
  height: 15px;
  border: 1px solid #bfc9d1;
  background: #fff;
}
.more b {
  width: 3px;
  height: 3px;
  border-radius: 2px;
  background: #6f8496;
}
.indicator-bar {
  display: flex;
  line-height: 38px;
  white-space: nowrap;
}
.indicator-bar button {
  padding: 0 10px;
}
.indicator-bar .first {
  display: flex;
  justify-content: flex-end;
  box-sizing: border-box;
  width: 36px;
}
.indicator-bar .bar-line {
  margin-top: 10px;
}
.indicator-bar .session {
  margin-left: auto;
  padding-right: 6px;
}
.side {
  position: relative;
  box-sizing: border-box;
  width: 291px;
  border-left: 1px solid #dfe3e7;
  overflow: hidden;
}
.side-inner {
  width: 351px;
}
.side h2 {
  padding-left: 6px;
  color: #2f3a45;
  font-size: 12px;
}
.side-tabs {
  display: flex;
  align-items: flex-end;
  box-sizing: border-box;
  height: 18px;
  border-bottom: 1px solid #e3e6ea;
}
.side-tabs button {
  flex: 1;
  border-bottom: 2px solid transparent;
  line-height: 24px;
}
.side-tabs .active {
  border-color: #dfa040;
  color: #ee9322;
}
.quote {
  height: 196px;
  border-bottom: 1px solid #e3e6ea;
  padding-left: 8px;
  box-sizing: border-box;
}
.quote h1 {
  display: flex;
  gap: 12px;
  padding-top: 10px;
  color: #2f3a45;
  font-size: 17px;
  line-height: 24px;
}
.price {
  display: flex;
  align-items: center;
  height: 26px;
  color: #cb2020;
  white-space: nowrap;
}
.price strong {
  font-size: 27px;
  line-height: 26px;
}
.price svg {
  width: 12px;
  height: 16px;
  margin: 0 5px 0 3px;
  fill: #cb2020;
}
.price em {
  width: 122px;
  font-size: 13px;
  font-style: normal;
  font-weight: bold;
}
.price time {
  color: #8b98a5;
  font-family: "Liberation Sans", "Noto Sans CJK SC", sans-serif;
}
.badges {
  display: flex;
  align-items: center;
  gap: 8px;
  height: 28px;
  padding-left: 2px;
}
.badges svg {
  width: 16px;
  height: 16px;
}
.bell {
  box-sizing: border-box;
  width: 18px;
  height: 18px;
  margin-left: 129px;
  border: 1px solid #b5c2ce;
}
.trade {
  width: 60px;
  height: 18px;
  border-radius: 2px;
  background: #ff8f00;
}
.stats {
  display: grid;
  grid-template-columns: repeat(3, 116px);
  padding-top: 5px;
}
.stats div {
  display: flex;
  gap: 4px;
  white-space: nowrap;
}
.stats dd {
  font-weight: bold;
}
.stats dd.plain {
  font-weight: normal;
}
.side .red {
  color: #cb2020;
}
.side .green {
  color: #2f9e20;
}
.fold {
  display: block;
  width: 335px;
  height: 12px;
}
.fold svg {
  width: 14px;
  height: 12px;
  margin: 0 auto;
}
.trades {
  height: 194px;
  border-bottom: 1px solid #e3e6ea;
  box-sizing: border-box;
}
.trades h2 {
  padding-top: 6px;
  margin-bottom: 6px;
}
.trades table {
  width: 351px;
  margin-left: 2px;
  border-collapse: collapse;
  table-layout: fixed;
  font: 13px/20px "Liberation Sans", sans-serif;
}
.trades td {
  padding: 0;
  width: 52px;
}
.trades .count, .trades td:last-child {
  width: 71px;
  box-sizing: border-box;
  padding-right: 9px;
  text-align: right;
}
.trades tr:last-child td:nth-child(-n+3) {
  font-weight: bold;
}
.thumb {
  width: 30px;
  height: 8px;
  margin: 13px 0 0 14px;
  background: #d8dde4;
}
.halves {
  display: grid;
  grid-template-columns: 1fr 1fr;
}
.titles {
  line-height: 29px;
}
.ratio {
  background: #ff8f00;
  color: #fff;
  font-weight: bold;
  line-height: 20px;
}
.ratio span {
  display: block;
  box-sizing: border-box;
  padding-left: 6px;
  background: #248bfa;
}
.quotes {
  border-bottom: 1px solid #e3e6ea;
  color: #cb2020;
  font: 16px/42px "Liberation Sans", sans-serif;
}
.bid, .ask {
  display: flex;
  align-items: center;
  justify-content: space-between;
  padding-left: 6px;
}
.bid {
  background: #dcebfc;
}
.ask {
  background: #f8e6d1;
}
.bid span {
  box-sizing: border-box;
  width: 45px;
  border: 1px solid #3a9a34;
  padding-right: 5px;
  background: #e6f7e6;
  color: #5c7c96;
  font-size: 12px;
  line-height: 13px;
  text-align: right;
}
.contract h2 {
  line-height: 28px;
}
.contract dl {
  padding: 8px 14px 0 12px;
}
.contract dl div {
  display: flex;
  justify-content: space-between;
  line-height: 22px;
  white-space: nowrap;
}
.contract dd {
  color: #2f3a45;
}
.brand {
  position: absolute;
  bottom: 8px;
  left: 132px;
  color: #a3a3a3;
  opacity: .9;
}
.brand-top {
  display: flex;
  gap: 5px;
}
.brand-top svg {
  width: 46px;
  height: 46px;
}
.brand strong, .brand small {
  display: block;
}
.brand strong {
  font-size: 31px;
  line-height: 36px;
}
.brand small {
  font: 11px/10px "Liberation Sans", sans-serif;
}
.brand-line {
  display: flex;
  justify-content: space-between;
  width: 136px;
  margin-left: 4px;
}
</style>
